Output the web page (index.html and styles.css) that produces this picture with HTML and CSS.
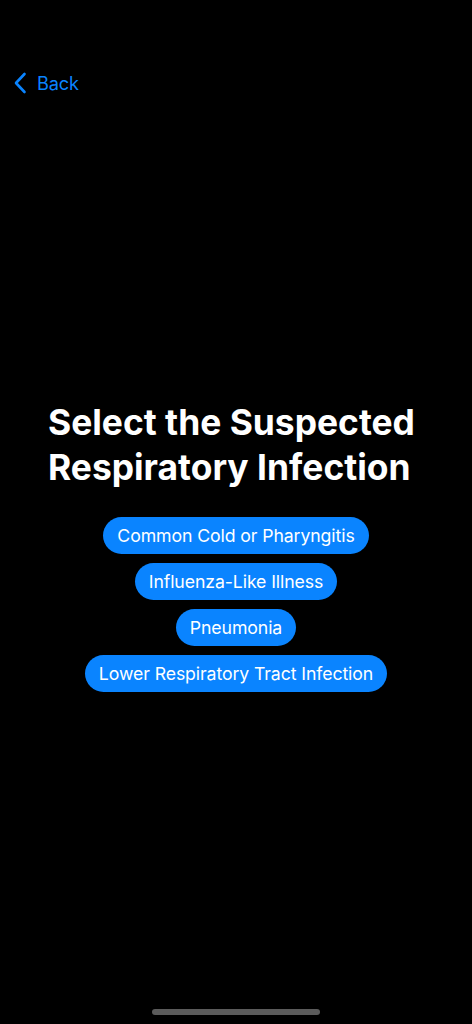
FILE: index.html
```html
<!DOCTYPE html>
<html>
<head>
<meta charset="utf-8">
<link rel="stylesheet" href="styles.css">
</head>
<body>
<div class="screen">
  <div class="nav">
    <div class="back">
      <svg class="chev" width="14" height="22" viewBox="0 0 14 22"><path d="M11.5 2 L3 11 L11.5 20" fill="none" stroke="#0A84FF" stroke-width="2.6" stroke-linecap="round" stroke-linejoin="round"/></svg>
      <span class="back-text">Back</span>
    </div>
  </div>
  <div class="content">
    <h1 class="title">Select the Suspected<br>Respiratory Infection</h1>
    <div class="options">
      <div class="pill">Common Cold or Pharyngitis</div>
      <div class="pill">Influenza-Like Illness</div>
      <div class="pill">Pneumonia</div>
      <div class="pill">Lower Respiratory Tract Infection</div>
    </div>
  </div>
  <div class="home"></div>
</div>
</body>
</html>
```
FILE: styles.css
```css
html, body { margin: 0; padding: 0; background: #000; }
body { font-family: Inter, "Noto Sans", sans-serif; color: #fff; }
.screen { width: 472px; height: 1024px; display: flex; flex-direction: column; position: relative; overflow: hidden; }
.nav { padding-top: 72px; box-sizing: border-box; height: 134px; }
.back { display: flex; align-items: center; padding-left: 13px; height: 22px; }
.chev { display: block; }
.back-text { color: #0A84FF; font-size: 18.2px; margin-left: 10px; line-height: 22px; letter-spacing: -0.2px; }
.content { flex: 1; display: flex; flex-direction: column; align-items: center; padding-top: 266px; }
.title { margin: 0; font-size: 35.4px; font-weight: 700; line-height: 45px; letter-spacing: 0; text-align: left; width: 376px; white-space: nowrap; }
.options { display: flex; flex-direction: column; align-items: center; gap: 9px; margin-top: 27px; }
.pill { background: #0A84FF; color: #fff; font-size: 17.7px; height: 37px; line-height: 37px; padding: 0 14px; border-radius: 18.5px; letter-spacing: -0.1px; }
.home { position: absolute; left: 152px; top: 1009px; width: 168px; height: 6px; border-radius: 3px; background: #5b5b5b; }
```
